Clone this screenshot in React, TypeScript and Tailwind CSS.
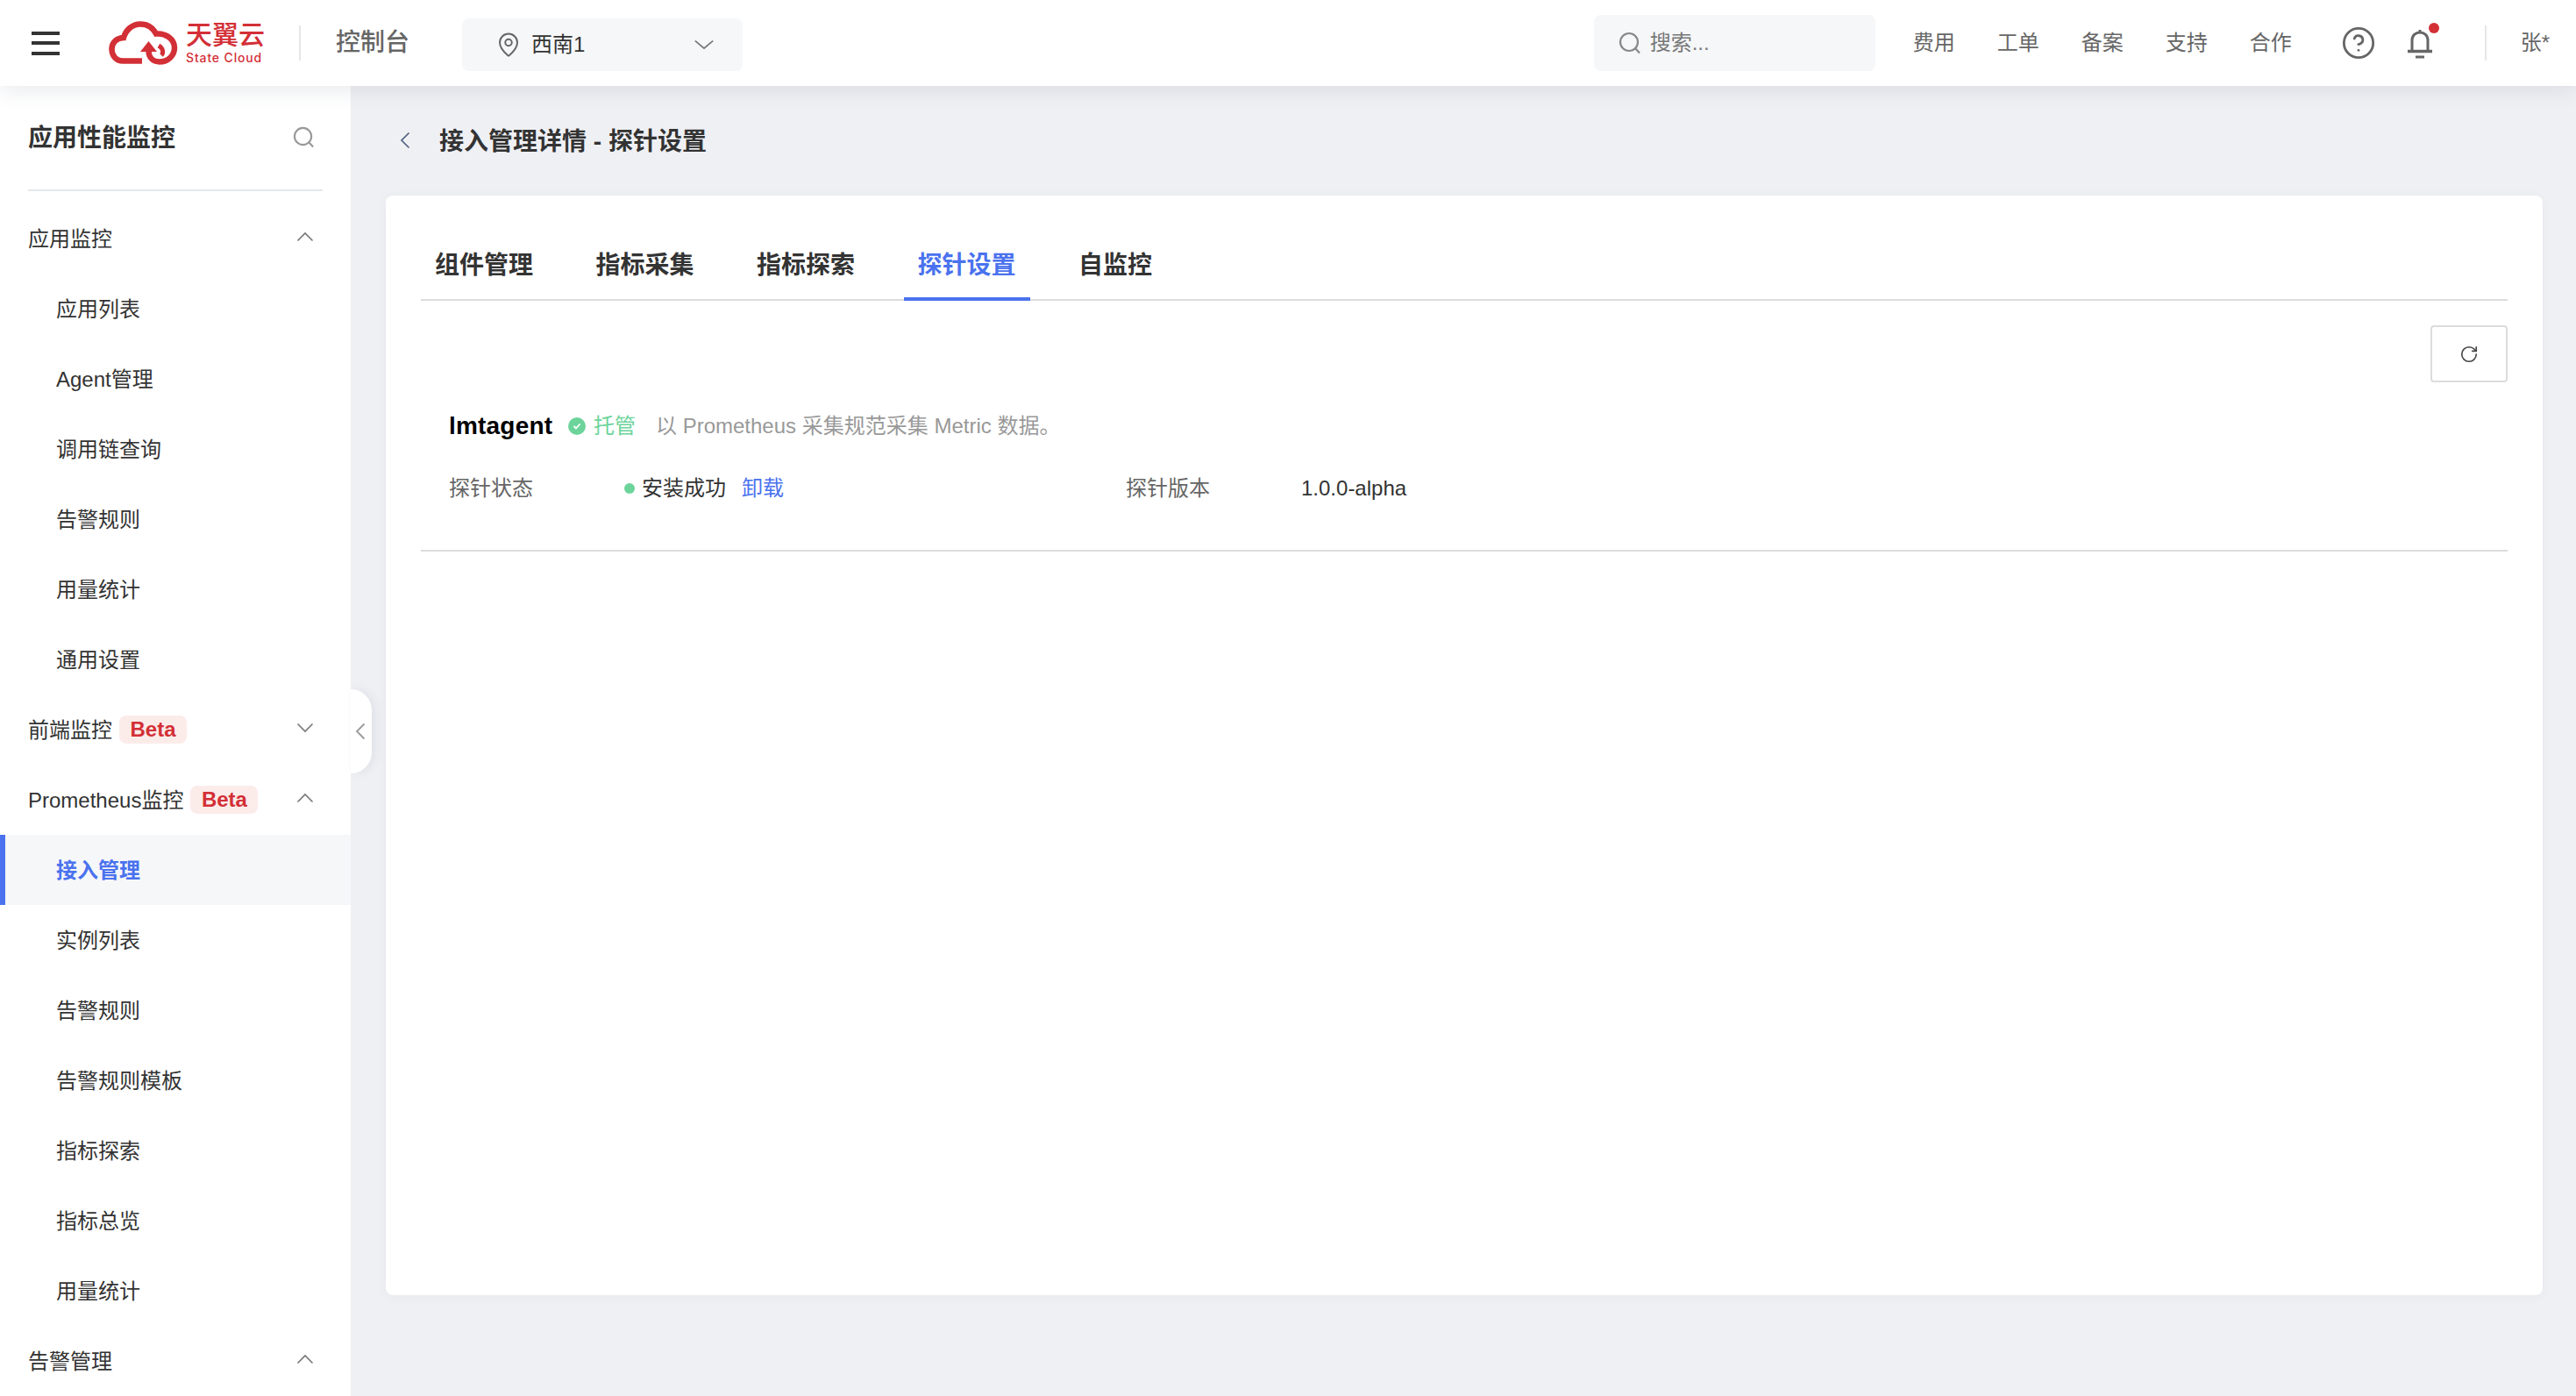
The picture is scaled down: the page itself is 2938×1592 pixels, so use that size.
import React from 'react';
import { MapPin, CircleHelp, RotateCw } from 'lucide-react';

const Chevron = ({ dir, className, width = 20 }: { dir: 'up' | 'down'; className?: string; width?: number }) => (
  <svg width={width} height="12" viewBox="0 0 20 12" fill="none" preserveAspectRatio="none" className={className}>
    <path d={dir === 'up' ? 'M1.5 10.5 L10 2 L18.5 10.5' : 'M1.5 1.5 L10 10 L18.5 1.5'} stroke="#777" strokeWidth="1.6" />
  </svg>
);

const Back = ({ color, width }: { color: string; width: number }) => (
  <svg width="12" height="20" viewBox="0 0 12 20" fill="none">
    <path d="M10.5 1.5 L2 10 L10.5 18.5" stroke={color} strokeWidth={width} />
  </svg>
);

const SearchGlyph = ({ color, size }: { color: string; size: number }) => (
  <svg width={size} height={size} viewBox="0 0 26 26" fill="none">
    <circle cx="12" cy="12" r="10" stroke={color} strokeWidth="2.2" />
    <path d="M19.5 19.5 L24 24.5" stroke={color} strokeWidth="2.2" />
  </svg>
);

const BetaTag = () => (
  <span className="ml-2 w-[77px] h-8 rounded-lg bg-[#fbecea] text-[#d32f36] text-[24px] font-bold flex items-center justify-center">
    Beta
  </span>
);

const Logo = () => (
  <div className="flex items-center gap-[9px]">
    <svg width="79" height="50" viewBox="0 0 79 50" fill="none">
      <path
        d="M38 45.5 H16 C8 45.5 3.5 39 3.5 32 C3.5 24.5 9.5 19 17 19 C19.5 10 27 3.5 36 3.5 C44 3.5 50.5 8 54 14.5 C65 13.5 75 20.5 75 30.5 C75 39.5 67.5 46.5 58 46.5 C50.5 46.5 45.5 41.5 45.5 34"
        stroke="#d32f36"
        strokeWidth="6.5"
      />
      <polygon points="36,35 45.5,23 55,35" fill="#d32f36" />
      <path d="M57 28 C62 31 63 36 60 39" stroke="#d32f36" strokeWidth="5" />
    </svg>
    <div className="flex flex-col items-start text-[#d32f36] w-[88px]">
      <span className="text-[30px] leading-[30px] font-medium whitespace-nowrap">天翼云</span>
      <span className="text-[14px] leading-[16px] tracking-[0.85px] mt-[3px] font-medium font-['Inter',sans-serif] whitespace-nowrap">State Cloud</span>
    </div>
  </div>
);

const nav = ['费用', '工单', '备案', '支持', '合作'];

const Header = () => (
  <header className="relative z-20 h-[98px] flex items-center bg-white shadow-[0_4px_24px_rgba(60,70,100,0.12)] shrink-0">
    <div className="ml-9 w-8 h-[27px] flex flex-col justify-between">
      <span className="h-1 bg-[#333]" />
      <span className="h-1 bg-[#333]" />
      <span className="h-1 bg-[#333]" />
    </div>
    <div className="ml-14">
      <Logo />
    </div>
    <div className="ml-[41px] w-0.5 h-10 bg-[#e6e6e6]" />
    <span className="ml-[40px] text-[28px] font-medium text-[#666]">控制台</span>
    <div className="ml-[60px] mt-1 w-80 h-[60px] rounded-lg bg-[#f6f7f9] flex items-center pl-10 pr-8">
      <MapPin size={30} strokeWidth={1.6} className="text-[#666] -ml-[2px]" />
      <span className="ml-[11px] text-[24px] text-[#333]">西南1</span>
      <Chevron dir="down" width={24} className="ml-auto" />
    </div>
    <div className="ml-auto w-[321px] h-16 rounded-lg bg-[#f6f7f9] flex items-center pl-7">
      <SearchGlyph color="#888" size={26} />
      <span className="ml-[10px] text-[24px] text-[#777]">搜索...</span>
    </div>
    <nav className="ml-[43px] flex items-center gap-12 text-[24px] text-[#666]">
      {nav.map((item) => (
        <span key={item}>{item}</span>
      ))}
    </nav>
    <CircleHelp size={40} strokeWidth={1.7} className="ml-14 text-[#666]" />
    <div className="relative ml-[34px] w-8 h-8">
      <svg width="32" height="34" viewBox="0 0 32 34" fill="none">
        <path d="M16 1 V4" stroke="#666" strokeWidth="3" />
        <path d="M7 24 V13 C7 7.5 11 4 16 4 C21 4 25 7.5 25 13 V24" stroke="#666" strokeWidth="3" />
        <path d="M2 25.5 H30" stroke="#666" strokeWidth="3.5" />
        <path d="M11 32 H21" stroke="#666" strokeWidth="3" />
      </svg>
      <span className="absolute -top-[7px] right-[-6px] w-3 h-3 rounded-full bg-[#d32f36]" />
    </div>
    <div className="ml-[58px] w-0.5 h-10 bg-[#e6e6e6]" />
    <span className="ml-[39px] mr-[30px] text-[24px] text-[#666]">张*</span>
  </header>
);

type Row = { label: string; group?: boolean; open?: boolean; beta?: boolean; active?: boolean };

const rows: Row[] = [
  { label: '应用监控', group: true, open: true },
  { label: '应用列表' },
  { label: 'Agent管理' },
  { label: '调用链查询' },
  { label: '告警规则' },
  { label: '用量统计' },
  { label: '通用设置' },
  { label: '前端监控', group: true, open: false, beta: true },
  { label: 'Prometheus监控', group: true, open: true, beta: true },
  { label: '接入管理', active: true },
  { label: '实例列表' },
  { label: '告警规则' },
  { label: '告警规则模板' },
  { label: '指标探索' },
  { label: '指标总览' },
  { label: '用量统计' },
  { label: '告警管理', group: true, open: true },
];

const Sidebar = () => (
  <aside className="relative z-10 w-[400px] shrink-0 bg-white">
    <div className="h-full overflow-hidden">
      <div className="mx-8 h-[120px] border-b-2 border-[#e4e7ec] flex items-center justify-between pt-0.5">
        <span className="text-[28px] font-semibold text-[#333]">应用性能监控</span>
        <span className="mr-[9px] -mt-1">
          <SearchGlyph color="#999" size={25} />
        </span>
      </div>
      <div className="mt-[14px]">
        {rows.map((row, i) =>
          row.group ? (
            <div key={i} className="h-20 pl-8 pr-[42px] flex items-center text-[24px] text-[#333]">
              <span className="mt-0.5">{row.label}</span>
              {row.beta && <BetaTag />}
              <Chevron dir={row.open ? 'up' : 'down'} className="ml-auto -mt-1" />
            </div>
          ) : row.active ? (
            <div key={i} className="h-20 pl-[58px] pt-0.5 flex items-center border-l-[6px] border-[#4a72ee] bg-[#f6f7f9] text-[24px] font-semibold text-[#4a72ee]">
              {row.label}
            </div>
          ) : (
            <div key={i} className="h-20 pl-16 pt-0.5 flex items-center text-[24px] text-[#333]">
              {row.label}
            </div>
          )
        )}
      </div>
    </div>
    {/* collapse handle */}
    <div className="absolute left-full top-[688px] w-6 h-24 rounded-r-[24px] bg-white shadow-[4px_0_12px_rgba(60,70,100,0.08)] flex items-center">
      <span className="ml-[5px] flex">
        <Back color="#999" width={1.8} />
      </span>
    </div>
  </aside>
);

const tabs = ['组件管理', '指标采集', '指标探索', '探针设置', '自监控'];

const Main = () => (
  <main className="flex-1 bg-[#eff0f4] pl-10 pr-[38px]">
    <div className="h-[125px] flex items-center gap-[33px] pl-4 pb-[2px]">
      <Back color="#4b5d7a" width={1.6} />
      <span className="mt-1 text-[28px] font-semibold text-[#333]">接入管理详情 - 探针设置</span>
    </div>
    <section className="h-[1254px] rounded-lg bg-white px-10 shadow-[0_2px_12px_rgba(60,70,100,0.05)]">
      <div className="h-[120px] border-b-2 border-[#dcdcdc] flex items-end gap-[39.5px]">
        {tabs.map((tab) => (
          <div
            key={tab}
            className={
              tab === '探针设置'
                ? 'h-[70px] -mb-0.5 px-4 pb-[6px] border-b-4 border-[#4a72ee] flex items-center text-[28px] font-semibold text-[#4a72ee]'
                : 'h-[70px] -mb-0.5 px-4 pb-[6px] border-b-4 border-transparent flex items-center text-[28px] font-semibold text-[#333]'
            }
          >
            {tab}
          </div>
        ))}
      </div>
      <div className="pt-7 flex justify-end">
        <button className="w-[88px] h-[65px] rounded border-2 border-[#dcdcdc] flex items-center justify-center">
          <RotateCw size={22} strokeWidth={1.8} className="text-[#444]" />
        </button>
      </div>
      <div className="h-[163px] border-b-2 border-[#dcdcdc] px-8">
        <div className="mt-[30px] h-10 flex items-center">
          <span className="text-[28px] font-bold text-black tracking-[0.2px] w-[136px]">lmtagent</span>
          <span className="w-5 h-5 rounded-full bg-[#6cd49a] flex items-center justify-center">
            <svg width="12" height="12" viewBox="0 0 12 12" fill="none">
              <path d="M2.5 6 L5 8.5 L9.5 3.5" stroke="#fff" strokeWidth="1.8" />
            </svg>
          </span>
          <span className="ml-[9px] text-[24px] text-[#6cd49a]">托管</span>
          <span className="ml-[23px] text-[24px] text-[#999]">以 Prometheus 采集规范采集 Metric 数据。</span>
        </div>
        <div className="mt-[31px] h-10 flex items-center text-[24px]">
          <span className="w-[200px] text-[#666]">探针状态</span>
          <span className="w-3 h-3 rounded-full bg-[#6cd49a]" />
          <span className="ml-2 text-[#333]">安装成功</span>
          <span className="ml-[18px] text-[#4a72ee]">卸载</span>
          <span className="ml-[390px] w-[200px] text-[#666]">探针版本</span>
          <span className="text-[#333]">1.0.0-alpha</span>
        </div>
      </div>
    </section>
  </main>
);

export default function App() {
  return (
    <div className="h-screen w-full overflow-hidden flex flex-col font-['Liberation_Sans','Noto_Sans_CJK_SC',sans-serif]">
      <Header />
      <div className="flex flex-1 min-h-0">
        <Sidebar />
        <Main />
      </div>
    </div>
  );
}
